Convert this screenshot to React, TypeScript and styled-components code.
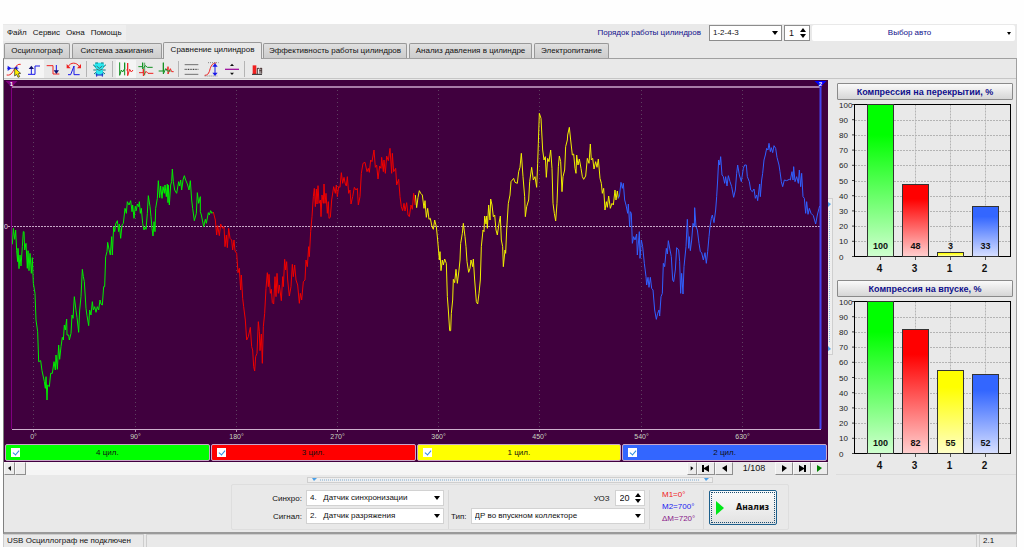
import React from "react";
import styled, { createGlobalStyle, css } from "styled-components";

const navy = "#10108c";
const face = "#e9e9e9";
const plotBg = "#40003e";

const GlobalStyle = createGlobalStyle`
  * { box-sizing: border-box; }
  body { margin: 0; background: #fefefe; }
  body, button, input, select {
    font-family: "Liberation Sans", Arial, sans-serif;
    font-size: 8px;
    line-height: 12px;
    color: #111;
  }
`;

const Page = styled.div`
  padding: 24px 7px 4px 3px;
`;

const Window = styled.div`
  background: ${face};
  display: flex;
  flex-direction: column;
`;

const Header = styled.header`
  display: flex;
  align-items: flex-start;
  height: 19px;
  padding-top: 1px;
`;

const Menu = styled.nav`
  display: flex;
  gap: 6px;
  width: 123px;
  height: 16px;
  padding: 2px 4px;
  background: #efefef;
`;

const MenuLink = styled.a`
  color: #111;
  text-decoration: none;
  white-space: nowrap;
`;

const OrderLabel = styled.label`
  margin: 2px 8px 0 auto;
  color: ${navy};
  white-space: nowrap;
`;

const SelectBox = styled.span<{ $w: number; $flat?: boolean }>`
  position: relative;
  display: block;
  width: ${(p) => p.$w}px;
  height: 16px;
  &::after {
    content: "";
    position: absolute;
    right: 4px;
    top: 6px;
    border: 3px solid transparent;
    border-top: 4px solid #000;
    border-bottom: 0;
    pointer-events: none;
  }
  select {
    appearance: none;
    display: block;
    width: 100%;
    height: 16px;
    padding: 0 12px 0 3px;
    border: 1px solid ${(p) => (p.$flat ? "#d2d2d2" : "#8c8c8c")};
    border-radius: 0;
    background: #fff;
  }
`;

const SpinBox = styled.span<{ $w: number; $flat?: boolean }>`
  position: relative;
  display: block;
  width: ${(p) => p.$w}px;
  height: 16px;
  input {
    appearance: textfield;
    display: block;
    width: 100%;
    height: 16px;
    padding: 0 0 0 4px;
    border: 1px solid ${(p) => (p.$flat ? "#d2d2d2" : "#8c8c8c")};
    background: #fff;
    font-size: 9px;
  }
  input::-webkit-inner-spin-button { display: none; }
  svg {
    position: absolute;
    right: 3px;
    top: 3px;
  }
`;

const AutoButton = styled.button`
  position: relative;
  width: 203px;
  height: 16px;
  margin-right: 2px;
  padding: 0 8px 0 0;
  border: 0;
  border-radius: 2px;
  background: #fff;
  color: ${navy};
  &::after {
    content: "";
    position: absolute;
    right: 4px;
    top: 7px;
    border: 2px solid transparent;
    border-top: 3px solid #000;
    border-bottom: 0;
  }
`;

const HeaderControls = styled.div`
  display: flex;
  gap: 2px;
`;

const Tabs = styled.div`
  display: flex;
  align-items: flex-end;
  gap: 2px;
  height: 15px;
  padding-left: 1px;
`;

const Tab = styled.button<{ $w: number; $active?: boolean }>`
  width: ${(p) => p.$w}px;
  height: 15px;
  padding: 0;
  border: 1px solid #989898;
  border-bottom: 0;
  border-radius: 2px 2px 0 0;
  background: linear-gradient(#e0e0e0, #cccccc);
  white-space: nowrap;
  ${(p) =>
    p.$active &&
    css`
      height: 17px;
      margin: 0 -1px -1px;
      padding-bottom: 2px;
      background: ${face};
      z-index: 1;
    `}
`;

const TabPage = styled.section`
  border: 1px solid #a0a0a0;
  border-left-color: #808080;
  border-bottom: 2px solid #9a9a9a;
`;

const Toolbar = styled.div`
  display: flex;
  align-items: center;
  height: 20px;
  border-bottom: 1px solid #c6c6c6;
`;

const ToolButton = styled.button<{ $on?: boolean }>`
  width: 20px;
  height: 18px;
  padding: 0;
  border: 0;
  background: ${(p) => (p.$on ? "#f5f5f5" : "transparent")};
  svg { display: block; }
`;

const ToolDivider = styled.span`
  width: 1px;
  height: 16px;
  margin: 0 3px 0 2px;
  background: #b4b4b4;
`;

const Work = styled.div`
  display: flex;
  padding-top: 1px;
`;

const PlotColumn = styled.div`
  flex: 1;
  min-width: 0;
`;

const Plot = styled.svg`
  display: block;
  width: 100%;
  height: 364px;
  background: ${plotBg};
`;

const CylinderRow = styled.div`
  display: flex;
  gap: 1px;
  height: 18px;
  padding: 0 1px 1px;
  background: ${plotBg};
`;

const Cylinder = styled.label<{ $color: string }>`
  flex: 1;
  position: relative;
  display: flex;
  align-items: center;
  justify-content: center;
  border: 1px solid #c9a6c9;
  border-radius: 2px;
  background: ${(p) => p.$color};
  input {
    appearance: none;
    position: absolute;
    left: 5px;
    top: 3px;
    width: 9px;
    height: 9px;
    margin: 0;
    background: #fff;
  }
  input:checked::after {
    content: "";
    position: absolute;
    left: 3px;
    top: 1px;
    width: 3px;
    height: 5px;
    border: solid #2c8be0;
    border-width: 0 1px 1px 0;
    transform: rotate(40deg);
  }
`;

const ScrollRow = styled.div`
  display: flex;
  height: 13px;
`;

const Track = styled.div`
  flex: 1;
  display: flex;
  background: #f5f5f5;
`;

const StepButton = styled.button<{ $w: number; $push?: boolean }>`
  display: flex;
  align-items: center;
  justify-content: center;
  width: ${(p) => p.$w}px;
  height: 13px;
  margin-left: ${(p) => (p.$push ? "auto" : "0")};
  padding: 0;
  border: 1px solid;
  border-color: #f8f8f8 #8e8e8e #8e8e8e #f8f8f8;
  background: #ececec;
`;

const Counter = styled.output`
  width: 42px;
  font-size: 9px;
  text-align: center;
`;

const VSplit = styled.div`
  align-self: flex-start;
  width: 5px;
  height: 157px;
  margin-top: 118px;
  border: 1px solid #cfcfcf;
  border-left: 0;
  background: #efefef;
  svg { display: block; }
`;

const Side = styled.aside`
  width: 180px;
  margin-left: 3px;
  display: flex;
  flex-direction: column;
  border-bottom: 1px solid #dcdcdc;
`;

const ChartTitle = styled.button`
  display: block;
  width: 176px;
  height: 17px;
  margin: 3px 0 0 1px;
  padding: 0;
  border: 1px solid #8a8a8a;
  border-radius: 1px;
  background: linear-gradient(#fafafa, #d6d6d6);
  color: ${navy};
  font-size: 9px;
  font-weight: bold;
`;

const BarSvg = styled.svg`
  display: block;
  width: 180px;
  height: 177px;
`;

const Bottom = styled.div`
  display: flex;
  flex-direction: column;
  align-items: center;
  padding: 2px 0 2px;
`;

const HSplit = styled.div`
  width: 406px;
  height: 6px;
  border: 1px solid #cfcfcf;
  background: #efefef;
  svg { display: block; width: 100%; }
`;

const Controls = styled.form`
  display: flex;
  width: 558px;
  height: 46px;
  margin-top: 1px;
  padding: 5px 8px 0 0;
  border: 1px solid #dedede;
  border-radius: 2px;
`;

const SourceFields = styled.div`
  display: grid;
  grid-template-columns: 70px 138px;
  grid-auto-rows: 16px;
  gap: 2px 4px;
  align-items: center;
  padding-right: 4px;
`;

const TypeFields = styled.div`
  display: grid;
  grid-template-columns: 1fr auto;
  grid-auto-rows: 16px;
  gap: 2px 4px;
  align-items: center;
  width: 202px;
  padding: 0 5px 0 2px;
  border: solid #d8d8d8;
  border-width: 0 1px;
`;

const FieldLabel = styled.label`
  padding-top: 2px;
  text-align: right;
  white-space: nowrap;
`;

const SpinGroup = styled.div`
  grid-column: 1 / -1;
  justify-self: end;
  display: flex;
  align-items: center;
  gap: 5px;
`;

const Markers = styled.div`
  width: 54px;
  margin-right: 5px;
  padding-left: 12px;
  border-right: 1px solid #d8d8d8;
`;

const Marker = styled.div<{ $color: string }>`
  color: ${(p) => p.$color};
  line-height: 12px;
  margin-top: -1px;
  margin-bottom: 1px;
`;

const RunButton = styled.button`
  display: flex;
  align-items: center;
  gap: 12px;
  width: 68px;
  height: 35px;
  padding: 0 0 0 6px;
  border: 1px solid #1c5f8c;
  border-radius: 2px;
  outline: 1px dotted #1c4d70;
  outline-offset: -3px;
  background: linear-gradient(#fbfbfb, #e2e2e2);
  font-family: "DejaVu Sans", sans-serif;
  font-weight: bold;
`;

const StatusBar = styled.footer`
  display: flex;
  gap: 2px;
  height: 13px;
`;

const StatusCell = styled.div<{ $w?: number }>`
  ${(p) => (p.$w ? `width: ${p.$w}px;` : "flex: 1;")}
  padding: 0 3px;
  border: 1px solid #cdcdcd;
  border-width: 1px 1px 0 1px;
  line-height: 12px;
  white-space: nowrap;
`;

/* Traces are sampled at a third of a pixel; x is counted from each trace's own origin. */
const traces = [
  {
    color: "#00f000",
    origin: -12,
    points:
      "37,493 40,445 44,478 47,450 50,512 53,545 54,505 57,566 60,525 63,558 67,500 70,455 72,455 74,510 78,490 82,565 84,512 87,572 90,520 94,580 97,533 100,610 105,640 108,720 113,755 116,845 122,842 126,872 133,905 136,925 138,890 141,960 143,915 148,920 152,880 157,880 162,845 166,870 168,825 172,868 176,795 179,838 183,800 187,772 190,780 193,735 196,750 200,717 201,765 206,765 208,780 213,760 216,705 219,715 223,650 228,692 231,712 236,757 239,690 243,650 247,568 250,590 253,605 258,685 261,707 266,737 269,690 273,705 277,665 280,690 284,680 288,697 292,680 296,690 300,660 303,672 307,675 311,620 314,620 317,530 321,515 323,487 327,508 331,525 335,470 337,525 341,440 344,455 347,432 352,422 356,455 358,432 362,475 366,435 370,430 375,385 379,400 382,365 387,375 392,362 396,395 398,375 402,415 406,378 409,392 412,372 416,380 418,365 421,400 424,385 428,430 432,450 436,440 438,448 442,400 445,347 450,380 453,410 456,445 459,468 462,425 465,455 467,385 472,355 475,302 479,353 482,318 486,355 489,320 493,340 495,315 499,350 502,312 504,368 505,315 508,375 512,315 515,305 517,267 520,305 524,330 530,340 536,305 539,318 542,300 545,330 549,300 553,287 557,300 562,312 567,330 571,302 575,360 578,385 583,422 589,400 592,338 596,370 601,350 601,395 604,405 611,440 616,418 619,430 625,398 628,405 632,392 636,400 640,396",
  },
  {
    color: "#f00000",
    origin: 588,
    points:
      "40,396 46,420 50,465 53,437 58,467 62,432 68,445 72,440 75,500 79,465 82,503 86,445 90,475 95,480 98,510 102,480 105,513 110,520 114,578 118,565 122,630 124,585 128,655 131,680 136,720 140,780 145,770 151,742 155,800 158,810 161,860 164,873 167,830 171,820 175,725 178,755 180,812 184,762 187,850 190,740 194,700 198,625 202,578 205,620 207,583 211,640 214,628 217,668 221,672 225,590 228,650 231,580 235,640 238,615 244,662 248,590 250,620 254,538 257,570 260,545 263,600 268,648 273,620 277,553 280,590 284,555 288,600 293,615 298,670 301,640 305,660 310,605 315,600 318,540 322,560 326,500 328,530 332,455 336,410 340,350 343,325 346,380 349,327 351,372 354,317 357,370 361,360 363,410 366,345 370,370 372,312 375,370 378,340 382,400 385,365 387,415 391,412 395,360 401,320 406,340 409,315 412,350 416,320 420,322 424,278 428,310 432,292 436,312 439,318 442,290 446,340 450,330 453,372 458,350 463,322 468,330 472,325 475,375 480,350 484,280 489,250 495,247 501,275 505,265 508,277 512,240 516,245 522,210 526,262 530,255 534,297 539,258 543,265 545,232 550,275 552,240 556,280 560,228 565,242 570,205 575,280 577,220 581,275 587,265 590,315 596,298 600,350 604,380 608,392 612,370 615,393 620,368 624,405 628,410 633,375 637,388 641,340 645,375",
  },
  {
    color: "#f0f000",
    origin: 1188,
    points:
      "46,345 50,383 54,352 58,332 62,340 67,345 72,385 75,362 79,412 83,385 87,418 91,415 96,440 100,448 104,420 109,440 113,480 118,540 120,515 123,572 127,540 130,555 134,537 139,550 142,650 145,690 149,752 152,752 154,700 158,660 160,598 164,608 168,568 172,610 177,570 180,540 182,490 187,460 190,430 195,470 198,500 201,545 206,577 210,565 213,540 218,560 220,537 224,600 229,665 233,672 237,640 241,600 244,500 249,450 252,455 254,408 258,432 260,408 262,445 266,375 270,420 272,357 276,375 280,410 284,405 288,450 292,465 297,430 301,408 304,480 308,500 310,560 315,510 317,520 320,450 325,370 330,345 333,305 341,295 345,307 352,310 356,275 360,262 364,220 369,290 374,350 376,410 380,380 386,360 389,305 395,262 400,300 405,290 410,322 413,250 415,190 418,100 423,115 428,210 432,240 436,230 439,292 443,235 447,245 452,210 456,265 459,370 463,400 467,423 471,370 475,260 478,228 482,245 486,335 489,290 494,270 497,200 502,180 503,165 508,142 512,180 517,225 521,222 525,265 528,280 530,225 534,255 538,237 543,265 547,290 551,298 557,288 562,235 567,250 571,192 574,240 578,235 582,267 587,245 591,262 595,237 600,295 604,310 607,340 611,325 615,390 619,365 622,382 626,348 631,385 636,370 640,375 645,330 648,360 652,333 655,355",
  },
  {
    color: "#3060ff",
    origin: 1818,
    points:
      "24,355 28,350 33,307 37,325 40,310 44,360 48,375 53,400 55,372 59,440 61,395 64,400 67,490 71,470 75,480 80,462 82,525 86,480 88,455 90,535 94,480 98,500 103,550 108,590 110,615 114,592 117,622 121,592 125,625 129,630 134,690 139,718 143,700 147,690 149,708 153,650 157,640 160,550 164,560 169,505 172,522 175,482 180,510 184,530 188,600 191,605 196,570 200,503 206,510 209,545 212,640 215,580 219,642 222,560 228,500 232,418 236,505 238,470 241,512 245,480 249,430 253,440 254,383 258,440 262,450 267,490 271,515 275,518 280,540 285,518 289,550 293,515 297,470 300,440 304,415 307,405 312,428 317,390 320,350 323,300 326,240 329,255 332,230 336,285 340,290 344,310 347,290 351,318 355,287 360,305 365,320 371,352 376,330 380,280 383,255 388,285 394,305 400,265 404,255 409,255 412,290 418,305 422,330 427,335 432,327 436,355 440,345 443,362 449,312 451,350 455,300 458,280 462,240 466,225 470,205 474,210 477,190 481,215 484,203 488,218 492,197 497,205 501,232 507,255 510,275 514,305 518,320 523,300 530,302 538,298 541,300 546,275 549,300 551,260 555,305 560,290 565,310 568,270 572,320 575,280 579,350 583,355 587,400 590,365 594,403 598,385 603,400 610,407 617,432 622,405 627,385 629,378",
  },
];

const PLOT_W = 824;
const pct = (x: number) => `${(x / PLOT_W) * 100}%`;

const gridMarks = [
  { x: 29.5, label: "0°" },
  { x: 131.5, label: "90°" },
  { x: 232.5, label: "180°" },
  { x: 333.5, label: "270°" },
  { x: 434.5, label: "360°" },
  { x: 535.5, label: "450°" },
  { x: 637.5, label: "540°" },
  { x: 738.5, label: "630°" },
];

function Oscillogram() {
  return (
    <Plot role="img" aria-label="Осциллограмма по цилиндрам">
      {gridMarks.map((g) => (
        <g key={g.label}>
          <line x1={pct(g.x)} x2={pct(g.x)} y1="10" y2="349" stroke="#5e4060" strokeDasharray="1 3" />
          <line x1={pct(g.x)} x2={pct(g.x)} y1="349" y2="352" stroke="#b090b0" />
          <text x={pct(g.x)} y="359" fill="#c8d4c0" fontSize="7" textAnchor="middle">
            {g.label}
          </text>
        </g>
      ))}
      <line x1={pct(8)} x2={pct(817)} y1="7" y2="7" stroke="#a87ca8" strokeWidth="2" />
      <line x1={pct(8)} x2={pct(817)} y1="349.5" y2="349.5" stroke="#cdb0cd" />
      <line x1={pct(4)} x2={pct(817)} y1="146.5" y2="146.5" stroke="#c8a8c8" strokeDasharray="2 1" />
      <text x="0" y="149" fill="#e4d8e4" fontSize="7">0</text>
      <svg viewBox="0 0 2472 1092" width="100%" height="364" preserveAspectRatio="none">
        {traces.map((t) => (
          <g key={t.color} transform={`translate(${t.origin} 0)`}>
            <polyline points={t.points} fill="none" stroke={t.color} strokeWidth="1" vectorEffect="non-scaling-stroke" />
          </g>
        ))}
      </svg>
      <line x1={pct(7.5)} x2={pct(7.5)} y1="4" y2="349" stroke="#800080" />
      <line x1={pct(816.5)} x2={pct(816.5)} y1="4" y2="349" stroke="#4444f0" strokeWidth="2" />
      <svg x={pct(7.5)} y="1" overflow="visible">
        <path d="M-6 0H6L0 6Z" fill="#800080" />
        <text x="0" y="5" fill="#fff" fontSize="6" fontWeight="bold" textAnchor="middle">1</text>
      </svg>
      <svg x={pct(816.5)} y="1" overflow="visible">
        <path d="M-6 0H6L0 6Z" fill="#0000ff" />
        <text x="0" y="5" fill="#fff" fontSize="6" fontWeight="bold" textAnchor="middle">2</text>
      </svg>
    </Plot>
  );
}

type Bar = { name: string; value: number };
const barColors: Record<string, [string, string]> = {
  "4": ["#00ff00", "#d0ffd0"],
  "3": ["#ff0000", "#ffd0d0"],
  "1": ["#ffff00", "#ffffc8"],
  "2": ["#3366ff", "#d8e0ff"],
};

function BarChart({ id, title, bars }: { id: string; title: string; bars: Bar[] }) {
  const top = 4.5;
  const bottom = 156.5;
  const yOf = (v: number) => Math.round(bottom - (v / 100) * (bottom - top)) + 0.5;
  return (
    <>
      <ChartTitle type="button">{title}</ChartTitle>
      <BarSvg role="img" aria-label={title}>
        <defs>
          {bars.map((b) => (
            <linearGradient key={b.name} id={`${id}-${b.name}`} x1="0" y1="0" x2="0" y2="1">
              <stop offset="0" stopColor={barColors[b.name][0]} />
              <stop offset="0.2" stopColor={barColors[b.name][0]} />
              <stop offset="1" stopColor={barColors[b.name][1]} />
            </linearGradient>
          ))}
        </defs>
        {[0, 10, 20, 30, 40, 50, 60, 70, 80, 90, 100].map((v) => {
          const y = bottom - (v / 100) * (bottom - top);
          return (
            <g key={v}>
              {v > 0 && v < 100 && (
                <line x1="19" x2="174" y1={Math.round(y) + 0.5} y2={Math.round(y) + 0.5} stroke="#b4b4b4" strokeDasharray="2 1" />
              )}
              <line x1="16" x2="19" y1={y} y2={y} stroke="#444" />
              <text x="3" y={y + 3} fontSize="8" fill="#222">{v}</text>
            </g>
          );
        })}
        {bars.map((b, i) => {
          const cx = 44.5 + i * 35;
          return (
            <line key={b.name} x1={cx} x2={cx} y1={top} y2={bottom} stroke="#b4b4b4" strokeDasharray="2 1" />
          );
        })}
        <rect x="18.5" y={top} width="156" height={bottom - top} fill="none" stroke="#000" />
        {bars.map((b, i) => {
          const cx = 44.5 + i * 35;
          const y = b.value === 100 ? top : yOf(b.value);
          return (
            <g key={b.name}>
              <rect x={cx - 13} y={y} width="26" height={bottom - y} fill={`url(#${id}-${b.name})`} stroke="#333" />
              <text x={cx} y="149" fontSize="9" fontWeight="bold" textAnchor="middle" fill="#111">{b.value}</text>
              <line x1={cx} x2={cx} y1="157" y2="160" stroke="#555" />
              <text x={cx - 1} y="172" fontSize="10" fontWeight="bold" textAnchor="middle" fill="#111">{b.name}</text>
            </g>
          );
        })}
      </BarSvg>
    </>
  );
}

const Icon = ({ children }: { children: React.ReactNode }) => (
  <svg width="20" height="18" viewBox="0 0 60 54" fill="none" strokeWidth="3" aria-hidden="true">
    {children}
  </svg>
);

const R = "#f02020";
const B = "#1818e8";
const G = "#109020";

type Tool = { name: string; on?: boolean; art: React.ReactNode };
const toolGroups: Tool[][] = [
  [
    {
      name: "Курсор",
      on: true,
      art: (
        <>
          <path d="M8 45C24 48 26 32 34 24C38 15 42 12 50 13" stroke={R} />
          <path d="M11 17V33L22 25ZM40 18V32L30 25Z" fill={B} />
          <path d="M9 25H44" stroke={B} strokeWidth="2" />
          <path d="M32 24V48L38 43L42 52L47 50L43 41L50 40Z" fill="#ffee00" stroke="#222" strokeWidth="2" />
        </>
      ),
    },
    {
      name: "Фронт",
      on: true,
      art: (
        <>
          <path d="M12 43H33V18H48M22 42V22" stroke={B} />
          <path d="M14 27L22 17L30 27Z" fill="#101070" />
        </>
      ),
    },
    {
      name: "Спад",
      art: (
        <>
          <path d="M8 17H27V42H46" stroke={R} />
          <path d="M37 15V34" stroke={B} />
          <path d="M29 31L37 42L45 31Z" fill="#101070" />
        </>
      ),
    },
    {
      name: "Пик",
      art: (
        <>
          <path d="M12 20C20 6 38 6 46 20" stroke={R} />
          <path d="M8 12V25H20ZM51 12V25H39Z" fill={R} />
          <path d="M12 44H20L30 18V44H47" stroke={B} />
        </>
      ),
    },
  ],
  [
    {
      name: "Отладка",
      art: (
        <>
          <path d="M16 8H40L44 18L38 28L41 46H16L19 28L12 18Z" fill="#28e8f0" />
          <path d="M9 14L18 22M48 14L39 22M10 30H19M47 30H38M12 42L19 36M45 42L38 36M16 9H24M33 9H41" stroke="#107880" />
          <path d="M20 18L28 25L37 18M19 27L28 31L38 27" stroke="#503838" strokeWidth="2" />
          <path d="M20 45H37M20 40V50M37 40V50" stroke="#2020c0" />
        </>
      ),
    },
  ],
  [
    {
      name: "Последовательно",
      on: true,
      art: (
        <>
          <path d="M11 7V46L16 30L20 36L26 26V8V46" stroke={G} />
          <path d="M31 30H35V9V47L41 28L46 36L51 30" stroke={R} />
        </>
      ),
    },
    {
      name: "Друг под другом",
      art: (
        <>
          <path d="M7 20H20V8V27L28 17L34 22H50" stroke={G} />
          <path d="M9 38H22V27V48L30 34L36 40H52" stroke={R} />
          <path d="M26 8V46" stroke={G} strokeWidth="2" />
        </>
      ),
    },
    {
      name: "Наложение",
      art: (
        <>
          <path d="M30 28H36V20V42L43 26L47 35H53" stroke={R} />
          <path d="M8 33H22V8V42L29 26L34 33H44" stroke={G} />
        </>
      ),
    },
  ],
  [
    {
      name: "Уровни",
      art: (
        <>
          <path d="M8 14H49M8 43H49" stroke="#707070" />
          <path d="M8 28H49" stroke="#222" strokeDasharray="3 2" />
        </>
      ),
    },
    {
      name: "Размах",
      art: (
        <>
          <path d="M8 46C24 46 22 26 28 18C32 10 36 10 42 9" stroke={R} />
          <path d="M18 8H50M8 48H46" stroke="#555" strokeWidth="2" strokeDasharray="3 3" />
          <path d="M39 16V42" stroke={B} />
          <path d="M31 20L39 10L47 20ZM31 38L39 48L47 38Z" fill={B} />
        </>
      ),
    },
    {
      name: "Сжать",
      art: (
        <>
          <path d="M9 28H51" stroke="#a018a0" strokeWidth="4" />
          <path d="M24 18L30 11L36 18ZM24 38L30 45L36 38Z" fill="#111" />
        </>
      ),
    },
  ],
  [
    {
      name: "Гистограмма",
      art: (
        <>
          <path d="M14 16H25V42H14Z" fill={R} />
          <path d="M12 43H42" stroke="#222" />
          <path d="M28 24V42M28 25H33M36 24V41M41 24V41M34 32H42M36 25H42" stroke="#4c3838" />
        </>
      ),
    },
  ],
];

const SpinArrows = () => (
  <svg width="7" height="10" viewBox="0 0 7 10" aria-hidden="true">
    <path d="M0 4L3 0L6 4ZM0 6L3 10L6 6Z" fill="#000" />
  </svg>
);

const Glyph = ({ d, color = "#000" }: { d: string; color?: string }) => (
  <svg width="9" height="7" viewBox="0 0 9 7" aria-hidden="true">
    <path d={d} fill={color} />
  </svg>
);

const tabs = [
  { label: "Осциллограф", w: 66 },
  { label: "Система зажигания", w: 90 },
  { label: "Сравнение цилиндров", w: 99, active: true },
  { label: "Эффективность работы цилиндров", w: 144 },
  { label: "Анализ давления в цилиндре", w: 123 },
  { label: "Электропитание", w: 75 },
];

const cylinders = [
  { label: "4 цил.", color: "#00ff00" },
  { label: "3 цил.", color: "#ff0000" },
  { label: "1 цил.", color: "#ffff00" },
  { label: "2 цил.", color: "#3366ff" },
];

export default function App() {
  return (
    <Page>
      <GlobalStyle />
      <Window>
        <Header>
          <Menu>
            {["Файл", "Сервис", "Окна", "Помощь"].map((m) => (
              <MenuLink href="#" key={m}>{m}</MenuLink>
            ))}
          </Menu>
          <OrderLabel htmlFor="order">Порядок работы цилиндров</OrderLabel>
          <HeaderControls>
            <SelectBox $w={73}>
              <select id="order"><option>1-2-4-3</option></select>
            </SelectBox>
            <SpinBox $w={26}>
              <input type="number" defaultValue={1} aria-label="Номер цилиндра" />
              <SpinArrows />
            </SpinBox>
            <AutoButton type="button">Выбор авто</AutoButton>
          </HeaderControls>
        </Header>
        <Tabs role="tablist">
          {tabs.map((t) => (
            <Tab key={t.label} role="tab" aria-selected={!!t.active} $w={t.w} $active={t.active}>
              {t.label}
            </Tab>
          ))}
        </Tabs>
        <TabPage>
          <Toolbar role="toolbar">
            {toolGroups.map((group, i) => (
              <React.Fragment key={i}>
                {i > 0 && <ToolDivider />}
                {group.map((t) => (
                  <ToolButton key={t.name} type="button" aria-label={t.name} $on={t.on}>
                    <Icon>{t.art}</Icon>
                  </ToolButton>
                ))}
              </React.Fragment>
            ))}
          </Toolbar>
          <Work>
            <PlotColumn>
              <Oscillogram />
              <CylinderRow>
                {cylinders.map((c) => (
                  <Cylinder key={c.label} $color={c.color}>
                    <input type="checkbox" defaultChecked />
                    {c.label}
                  </Cylinder>
                ))}
              </CylinderRow>
              <ScrollRow>
                <Track>
                  <StepButton $w={11} type="button" aria-label="Влево"><Glyph d="M6 1V6L3 3Z" /></StepButton>
                  <StepButton $w={11} type="button" aria-label="Ползунок" />
                  <StepButton $w={10} $push type="button" aria-label="Вправо"><Glyph d="M3 1V6L6 3Z" /></StepButton>
                </Track>
                <StepButton $w={18} type="button" aria-label="В начало"><Glyph d="M0 0H2V3L7 0V7L2 4V7H0Z" /></StepButton>
                <StepButton $w={18} type="button" aria-label="Назад"><Glyph d="M7 0V7L2 3Z" /></StepButton>
                <Counter>1/108</Counter>
                <StepButton $w={18} type="button" aria-label="Вперёд"><Glyph d="M2 0V7L7 3Z" /></StepButton>
                <StepButton $w={18} type="button" aria-label="В конец"><Glyph d="M8 0H6V3L1 0V7L6 4V7H8Z" /></StepButton>
                <StepButton $w={17} type="button" aria-label="Пуск"><Glyph d="M2 0V7L7 3Z" color="#008000" /></StepButton>
              </ScrollRow>
            </PlotColumn>
            <VSplit>
              <svg width="4" height="155" aria-hidden="true">
                <path d="M0 3L3 5L0 8ZM0 147L3 150L0 152Z" fill="#4aa0e8" />
                <line x1="1.5" x2="1.5" y1="12" y2="144" stroke="#86bce8" strokeDasharray="1 1" />
              </svg>
            </VSplit>
            <Side>
              <BarChart
                id="overlap"
                title="Компрессия на перекрытии, %"
                bars={[
                  { name: "4", value: 100 },
                  { name: "3", value: 48 },
                  { name: "1", value: 3 },
                  { name: "2", value: 33 },
                ]}
              />
              <BarChart
                id="intake"
                title="Компрессия на впуске, %"
                bars={[
                  { name: "4", value: 100 },
                  { name: "3", value: 82 },
                  { name: "1", value: 55 },
                  { name: "2", value: 52 },
                ]}
              />
            </Side>
          </Work>
          <Bottom>
            <HSplit>
              <svg height="4" aria-hidden="true">
                <path d="M4 0H9L6 3Z" fill="#4aa0e8" />
                <line x1="12" x2="97%" y1="2" y2="2" stroke="#b4cce0" strokeWidth="2" strokeDasharray="1 1" />
                <svg x="100%" overflow="visible"><path d="M-8 0H-3L-6 3Z" fill="#4aa0e8" /></svg>
              </svg>
            </HSplit>
            <Controls>
              <SourceFields>
                <FieldLabel htmlFor="sync">Синхро:</FieldLabel>
                <SelectBox $w={138} $flat>
                  <select id="sync"><option>4.&nbsp;&nbsp; Датчик синхронизации</option></select>
                </SelectBox>
                <FieldLabel htmlFor="signal">Сигнал:</FieldLabel>
                <SelectBox $w={138} $flat>
                  <select id="signal"><option>2.&nbsp;&nbsp; Датчик разряжения</option></select>
                </SelectBox>
              </SourceFields>
              <TypeFields>
                <SpinGroup>
                  <FieldLabel htmlFor="uoz">УОЗ</FieldLabel>
                  <SpinBox $w={30} $flat>
                    <input id="uoz" type="number" defaultValue={20} />
                    <SpinArrows />
                  </SpinBox>
                </SpinGroup>
                <FieldLabel htmlFor="kind">Тип:</FieldLabel>
                <SelectBox $w={174} $flat>
                  <select id="kind"><option>ДР во впускном коллекторе</option></select>
                </SelectBox>
              </TypeFields>
              <Markers>
                <Marker $color="#f01818">M1=0°</Marker>
                <Marker $color="#1818f0">M2=700°</Marker>
                <Marker $color="#881888">ΔM=720°</Marker>
              </Markers>
              <RunButton type="button">
                <svg width="8" height="14" viewBox="0 0 8 14" aria-hidden="true">
                  <path d="M0 0L8 7L0 14Z" fill="#00e818" />
                </svg>
                Анализ
              </RunButton>
            </Controls>
          </Bottom>
        </TabPage>
        <StatusBar>
          <StatusCell $w={141}>USB Осциллограф не подключен</StatusCell>
          <StatusCell />
          <StatusCell $w={38}>2.1</StatusCell>
        </StatusBar>
      </Window>
    </Page>
  );
}
